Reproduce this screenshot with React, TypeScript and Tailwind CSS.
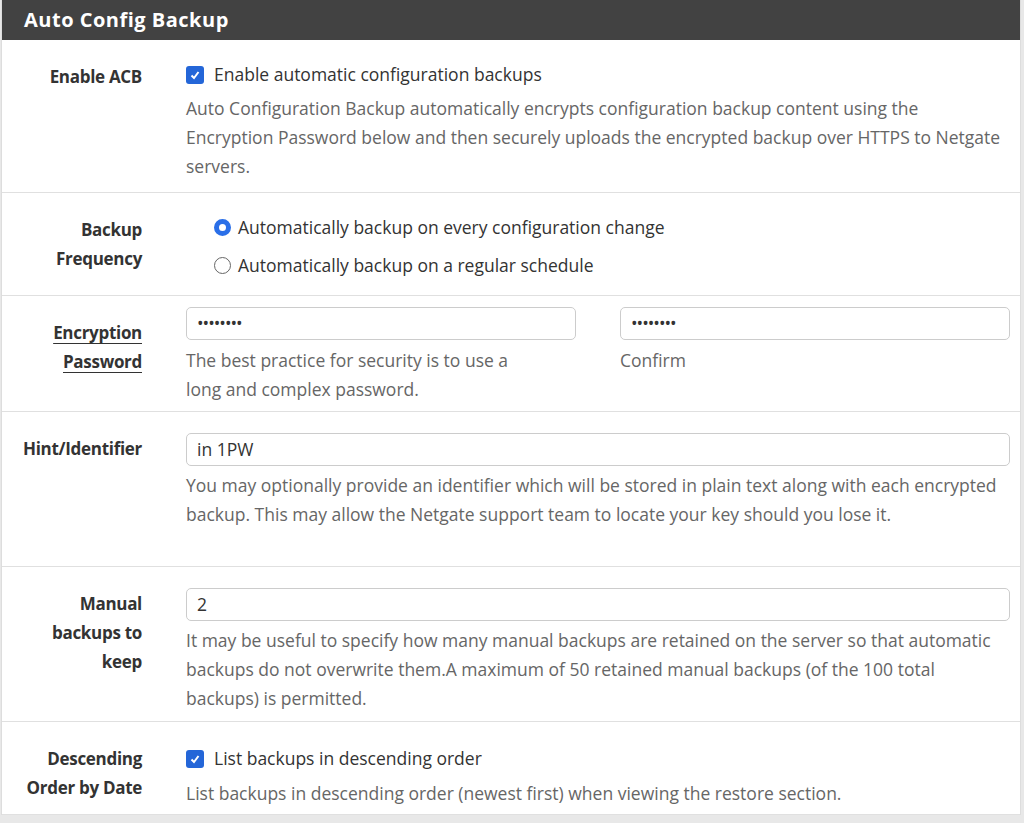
import React from "react";

const F = { fontFamily: "'Open Sans', 'Liberation Sans', sans-serif" };

function Row({ label, children, h, underline }: { label: React.ReactNode; children: React.ReactNode; h: string; underline?: boolean }) {
  return (
    <div className={`flex border-b border-[#e0e0e0] ${h}`}>
      <div className="w-[140px] shrink-0 text-right font-bold text-[17px] leading-[29px] text-[#333] pt-[22px] tracking-[-0.3px]">
        <span className={underline ? "underline underline-offset-4" : ""}>{label}</span>
      </div>
      <div className="flex-1 pl-[44px] pr-[10px] pt-[22px]">{children}</div>
    </div>
  );
}

const Help = ({ children }: { children: React.ReactNode }) => (
  <div className="text-[17.5px] leading-[29px] text-[#666]">{children}</div>
);

const Input = ({ v, dots }: { v: string; dots?: boolean }) => (
  <div className={`h-[33px] border border-[#ccc] rounded-[5px] px-[10px] flex items-center text-[17.5px] text-[#333] ${dots ? "tracking-[-1px]" : ""}`}>{v}</div>
);

const Check = () => (
  <span className="inline-flex w-[18px] h-[18px] rounded-[3px] bg-[#2466d8] items-center justify-center mr-[10px]">
    <svg width="12" height="12" viewBox="0 0 12 12"><path d="M2.5 6.5l2.5 2.5 4.5-6" stroke="white" strokeWidth="2" fill="none" /></svg>
  </span>
);

export default function App() {
  return (
    <div style={F} className="w-[1024px] h-[823px] bg-[#e8e8e8]">
      <div className="bg-white border-x border-[#ddd] w-[1020px] ml-[1px]">
        <div className="h-[40px] bg-[#424242] text-white text-[20px] font-bold flex items-center pl-[22px] tracking-[0.5px]">Auto Config Backup</div>
        <Row label="Enable ACB" h="h-[153px]">
          <div className="flex items-center text-[17.5px] leading-[29px] text-[#333] -mt-[2px] mb-[5px]"><Check />Enable automatic configuration backups</div>
          <Help>Auto Configuration Backup automatically encrypts configuration backup content using the Encryption Password below and then securely uploads the encrypted backup over HTTPS to Netgate servers.</Help>
        </Row>
        <Row label={<>Backup<br />Frequency</>} h="h-[103px]">
          <div className="pl-[28px] text-[17.5px] text-[#333]">
            <div className="flex items-center h-[29px] -mt-[2px]">
              <span className="w-[17px] h-[17px] rounded-full border-[5px] border-[#2a6fe8] mr-[7px]" />Automatically backup on every configuration change
            </div>
            <div className="flex items-center h-[29px] mt-[9px]">
              <span className="w-[17px] h-[17px] rounded-full border border-[#666] mr-[7px]" />Automatically backup on a regular schedule
            </div>
          </div>
        </Row>
        <Row label={<>Encryption<br />Password</>} h="h-[116px]" underline>
          <div className="flex gap-[44px] -mt-[11px]">
            <div className="flex-1"><Input v="••••••••" dots /><div className="mt-[6px]"><Help>The best practice for security is to use a<br />long and complex password.</Help></div></div>
            <div className="flex-1"><Input v="••••••••" dots /><div className="mt-[6px]"><Help>Confirm</Help></div></div>
          </div>
        </Row>
        <Row label="Hint/Identifier" h="h-[155px]">
          <div className="-mt-[1px]"><Input v="in 1PW" /><div className="mt-[5px]"><Help>You may optionally provide an identifier which will be stored in plain text along with each encrypted backup. This may allow the Netgate support team to locate your key should you lose it.</Help></div></div>
        </Row>
        <Row label={<>Manual<br />backups to<br />keep</>} h="h-[155px]">
          <div className="-mt-[1px]"><Input v="2" /><div className="mt-[5px]"><Help>It may be useful to specify how many manual backups are retained on the server so that automatic backups do not overwrite them.A maximum of 50 retained manual backups (of the 100 total backups) is permitted.</Help></div></div>
        </Row>
        <Row label={<>Descending<br />Order by Date</>} h="h-[93px]">
          <div className="flex items-center text-[17.5px] leading-[29px] text-[#333] mb-[6px]"><Check />List backups in descending order</div>
          <Help>List backups in descending order (newest first) when viewing the restore section.</Help>
        </Row>
      </div>
    </div>
  );
}
